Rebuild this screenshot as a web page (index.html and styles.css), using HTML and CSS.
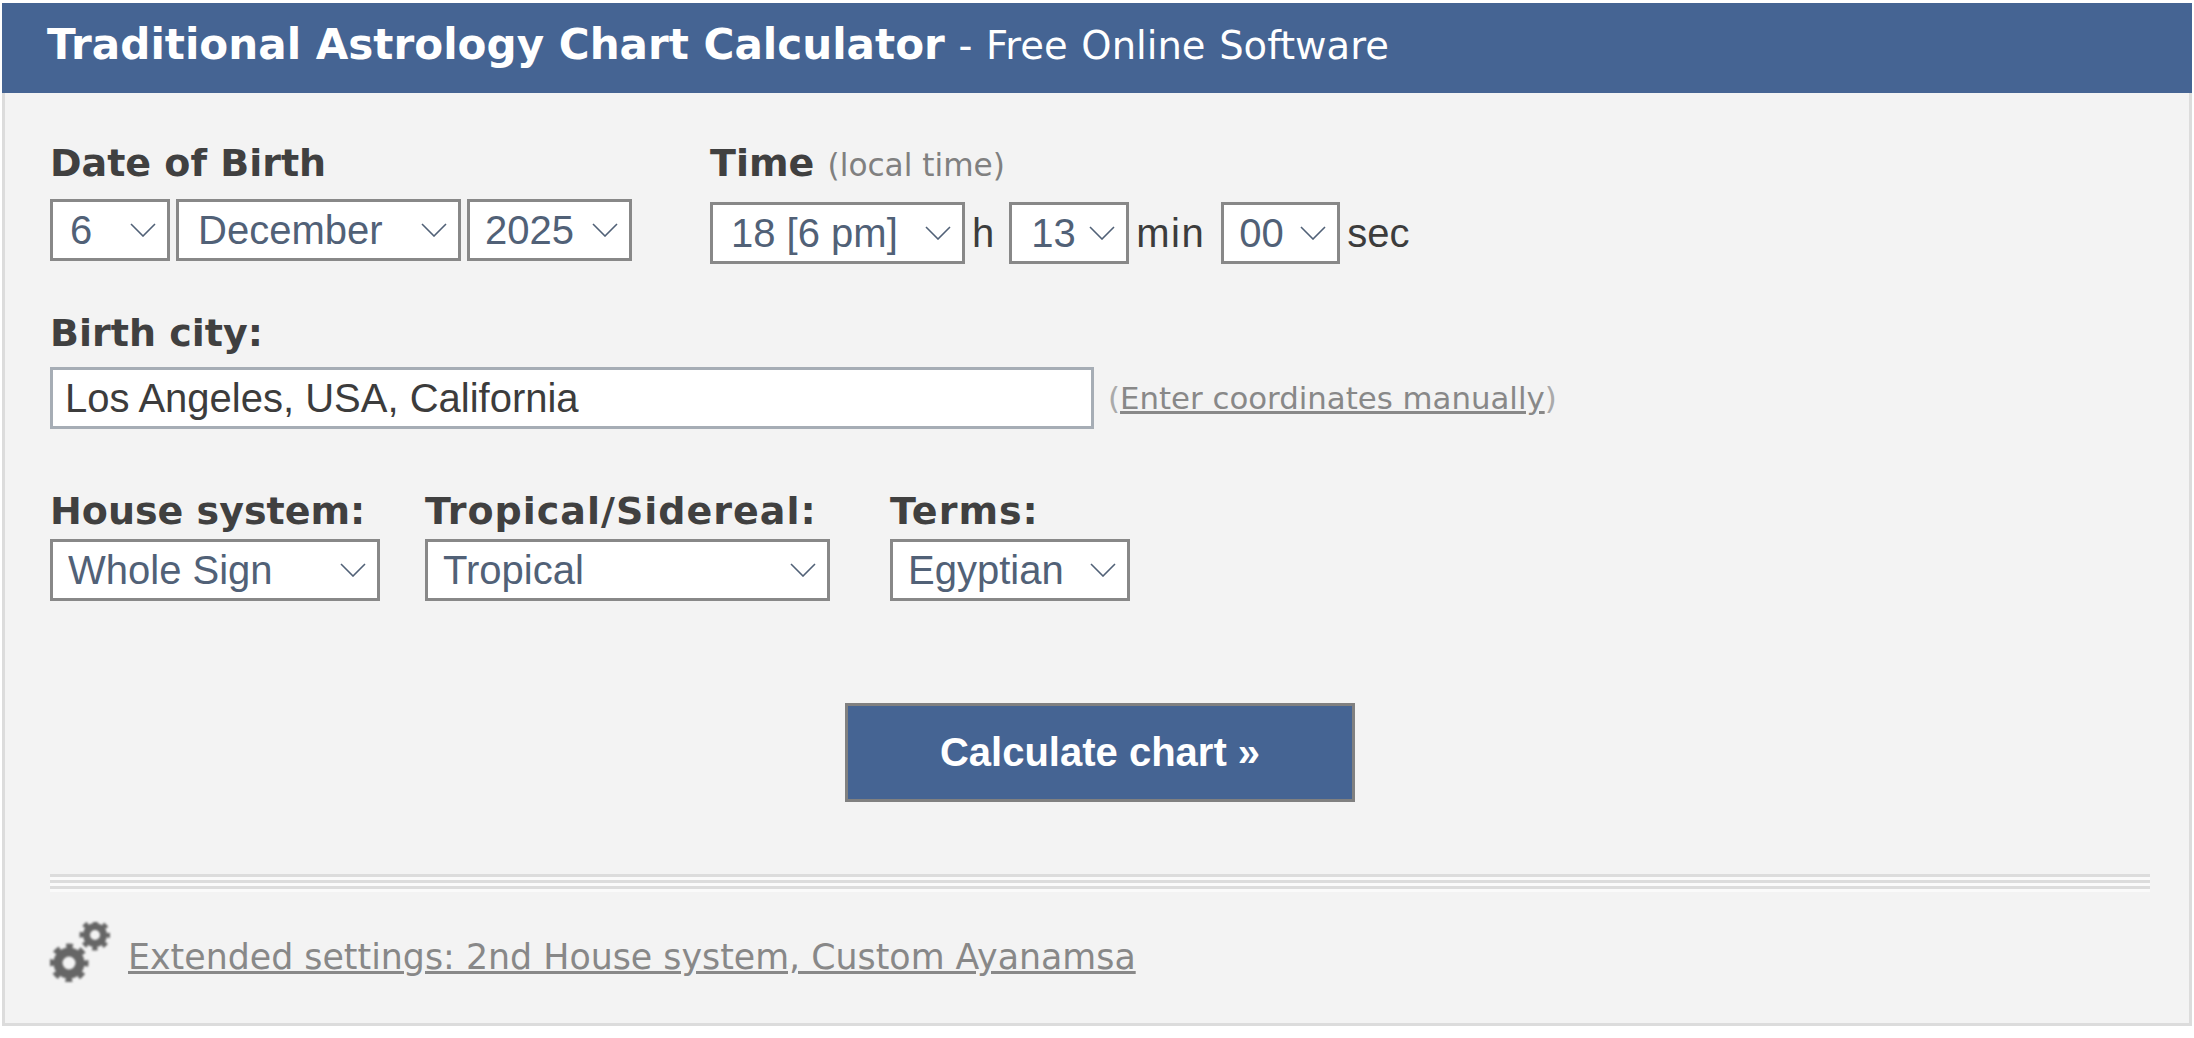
FILE: index.html
```html
<!DOCTYPE html>
<html lang="en">
<head>
    <meta charset="UTF-8">
    <meta name="viewport" content="width=device-width, initial-scale=1.0">
    <title>Traditional Astrology Chart Calculator</title>
    <link rel="stylesheet" href="styles.css">
</head>
<body>

    <div class="header-bar">
        <b>Traditional Astrology Chart Calculator</b> - Free Online Software
    </div>

    <form class="panel">
        <!-- Date and time -->
        <div class="row date-row">
            <div class="date-group">
                <label class="field-label">Date of Birth</label>
                <div class="selects">
                    <select class="sel-day"><option>6</option></select>
                    <select class="sel-month"><option>December</option></select>
                    <select class="sel-year"><option>2025</option></select>
                </div>
            </div>
            <div class="time-group">
                <label class="field-label">Time <span class="hint">(local time)</span></label>
                <div class="selects time-selects">
                    <select class="sel-hour"><option>18 [6 pm]</option></select>
                    <span class="unit unit-h">h</span>
                    <select class="sel-min"><option>13</option></select>
                    <span class="unit unit-min">min</span>
                    <select class="sel-sec"><option>00</option></select>
                    <span class="unit">sec</span>
                </div>
            </div>
        </div>

        <!-- City -->
        <div class="city-group">
            <label class="field-label">Birth city:</label>
            <div class="city-line">
                <input class="city-input" type="text" value="Los Angeles, USA, California">
                <span class="manual">(<a href="#">Enter coordinates manually</a>)</span>
            </div>
        </div>

        <!-- Chart options -->
        <div class="row options-row">
            <div>
                <label class="field-label">House system:</label>
                <select class="sel-house"><option>Whole Sign</option></select>
            </div>
            <div>
                <label class="field-label wide-label">Tropical/Sidereal:</label>
                <select class="sel-zodiac"><option>Tropical</option></select>
            </div>
            <div>
                <label class="field-label wide-label">Terms:</label>
                <select class="sel-terms"><option>Egyptian</option></select>
            </div>
        </div>

        <div class="submit-line">
            <button class="calc-btn" type="button">Calculate chart »</button>
        </div>

        <div class="triple-rule"></div>

        <div class="extended">
            <svg class="gears" width="60" height="60" viewBox="0 0 60 60">
                <g fill="none" stroke="#666">
                    <circle cx="19" cy="41" r="11" stroke-width="9"/>
                    <circle cx="19" cy="41" r="16.5" stroke-width="6" stroke-dasharray="6.5 6.46" stroke-dashoffset="3.25"/>
                    <circle cx="45" cy="13" r="8.5" stroke-width="7"/>
                    <circle cx="45" cy="13" r="13" stroke-width="5" stroke-dasharray="5.1 5.11" stroke-dashoffset="2.55"/>
                </g>
            </svg>
            <a href="#">Extended settings: 2nd House system, Custom Ayanamsa</a>
        </div>
    </form>

</body>
</html>
```

FILE: styles.css
```css
body {
    margin: 3px 2px 0;
    background: #fff;
    font-family: "DejaVu Sans", Verdana, sans-serif;
    color: #404040;
}

.header-bar {
    height: 90px;
    line-height: 84px;
    padding-left: 45px;
    background-color: #456493;
    color: #fff;
    font-size: 38.5px;
    word-spacing: 1.4px;
}

.header-bar b {
    font-size: 42.1px;
    word-spacing: 0;
}

.panel {
    height: 933px;
    box-sizing: border-box;
    border: 3px solid #dcdcdc;
    border-top: 0;
    background-color: #f3f3f3;
    padding: 0 39px 0 45px;
}

.row {
    display: flex;
}

.field-label {
    display: block;
    font-size: 38px;
    font-weight: bold;
    line-height: 46px;
}

.wide-label {
    letter-spacing: 1px;
}

.hint {
    font-size: 31.2px;
    font-weight: normal;
    color: #808080;
}

select {
    display: block;
    height: 62px;
    box-sizing: border-box;
    margin: 0;
    padding: 0 0 0 15px;
    border: 3px solid #888;
    border-radius: 0;
    background: #fff url("data:image/svg+xml,%3Csvg xmlns='http://www.w3.org/2000/svg' width='26' height='14'%3E%3Cpath d='M1 1l12 12L25 1' fill='none' stroke='%23516177' stroke-width='1.6'/%3E%3C/svg%3E") no-repeat right 11px center;
    appearance: none;
    font-family: "Liberation Sans", Arial, sans-serif;
    font-size: 40px;
    color: #516177;
}

.date-row {
    gap: 78px;
    padding-top: 47px;
}

.selects {
    display: flex;
    gap: 6px;
    margin-top: 13px;
}

.sel-day { width: 120px; padding-left: 17px; }
.sel-month { width: 285px; padding-left: 19px; }
.sel-year { width: 165px; }

.time-selects {
    align-items: center;
    gap: 0;
    margin-top: 14px;
}

.sel-hour { width: 255px; padding-left: 18px; }
.sel-min { width: 120px; padding-left: 19px; }
.sel-sec { width: 119px; padding-left: 15px; }

.unit {
    margin-left: 7px;
    font-family: "Liberation Sans", Arial, sans-serif;
    font-size: 40px;
    color: #3c3c3c;
}

.unit-h { margin-right: 15px; }
.unit-min { margin-right: 16px; letter-spacing: 1.5px; }

.city-group {
    margin-top: 46px;
}

.city-line {
    display: flex;
    align-items: center;
    margin-top: 11px;
}

.city-input {
    width: 1044px;
    height: 62px;
    box-sizing: border-box;
    margin: 0;
    padding: 0 12px;
    border: 3px solid #a6adb5;
    border-radius: 0;
    background: #fff;
    font-family: "Liberation Sans", Arial, sans-serif;
    font-size: 40px;
    color: #3c3c3c;
}

.manual {
    margin-left: 14px;
    font-size: 30.8px;
    color: #aaa;
}

.manual a, .extended a {
    color: #888;
}

.options-row {
    gap: 45px;
    margin-top: 59px;
}

.options-row .field-label {
    margin-bottom: 5px;
}

.options-row > div:last-child {
    margin-left: 15px;
}

.sel-house { width: 330px; padding-left: 15px; }
.sel-zodiac { width: 405px; padding-left: 15px; }
.sel-terms { width: 240px; padding-left: 15px; }

.submit-line {
    display: flex;
    justify-content: center;
    margin-top: 102px;
}

.calc-btn {
    width: 510px;
    height: 99px;
    border: 3px solid #808080;
    background-color: #456493;
    color: #fff;
    font-family: "Liberation Sans", Arial, sans-serif;
    font-size: 40px;
    font-weight: bold;
}

.triple-rule {
    height: 18px;
    margin-top: 72px;
    background: repeating-linear-gradient(#dcdcdc 0 3px, #fafafa 3px 6px);
}

.extended {
    display: flex;
    align-items: flex-end;
    gap: 18px;
    margin-top: 30px;
}

.gears {
    flex: none;
    filter: blur(0.8px);
}

.extended a {
    margin-bottom: 2px;
    font-size: 34.8px;
    line-height: 46px;
}
```
